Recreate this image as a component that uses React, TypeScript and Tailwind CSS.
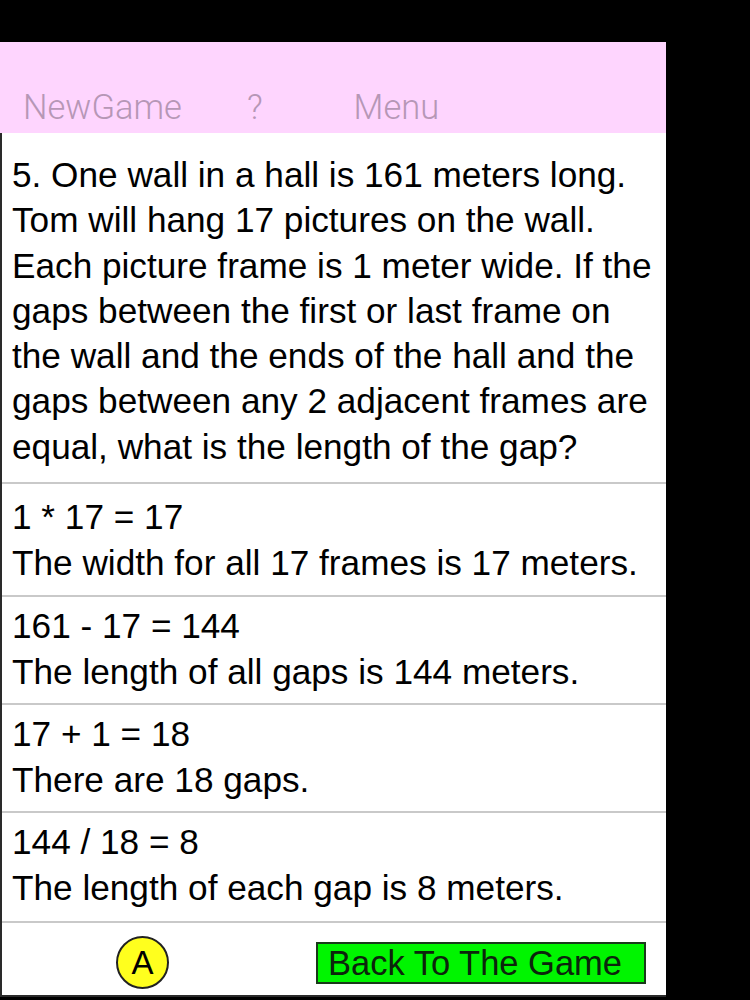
const question = [
  '5. One wall in a hall is 161 meters long.',
  'Tom will hang 17 pictures on the wall.',
  'Each picture frame is 1 meter wide. If the',
  'gaps between the first or last frame on',
  'the wall and the ends of the hall and the',
  'gaps between any 2 adjacent frames are',
  'equal, what is the length of the gap?',
];

const steps = [
  { math: '1 * 17 = 17', note: 'The width for all 17 frames is 17 meters.', box: 'h-[111px] pt-[10px]' },
  { math: '161 - 17 = 144', note: 'The length of all gaps is 144 meters.', box: 'h-[106px] pt-[6px]' },
  { math: '17 + 1 = 18', note: 'There are 18 gaps.', box: 'h-[106px] pt-[6px]' },
  { math: '144 / 18 = 8', note: 'The length of each gap is 8 meters.', box: 'h-[108px] pt-[6px]' },
];

function Divider() {
  return <div className="h-[2px] bg-[#c9c9c9]" />;
}

export default function App() {
  return (
    <div className="h-[1000px] w-[750px] bg-black pt-[42px] font-['Liberation_Sans',Arial,sans-serif] text-black">
      <div className="flex h-[955px] w-[666px] flex-col bg-white">
        <header className="flex h-[91px] items-end bg-[#fed5fe] pb-[6px] font-['Roboto',sans-serif] text-[34.5px] font-light leading-[40px] text-[#b697b6]">
          <span className="ml-[23px]">NewGame</span>
          <span className="ml-[65px]">?</span>
          <span className="ml-[91px]">Menu</span>
        </header>

        <main className="flex flex-1 flex-col border-l-2 border-[#2a2a2a]">
          <section className="h-[349px] pl-[10px] pt-[19px] text-[35.2px] leading-[45.3px]">
            {question.map((line) => (
              <div key={line} className="whitespace-nowrap">
                {line}
              </div>
            ))}
          </section>

          {steps.map((s) => (
            <div key={s.math}>
              <Divider />
              <section className={`${s.box} pl-[10px] text-[35.2px] leading-[46px]`}>
                <div className="whitespace-nowrap">{s.math}</div>
                <div className="whitespace-nowrap">{s.note}</div>
              </section>
            </div>
          ))}

          <Divider />
          <footer className="flex flex-1 items-start border-b-2 border-[#2a2a2a] pt-[13px]">
            <div className="ml-[114px] flex h-[53px] w-[53px] items-center justify-center rounded-full border-2 border-[#222] bg-[#ffff1e] text-[33px] leading-none">
              A
            </div>
            <button
              type="button"
              className="ml-auto mr-[20px] mt-[6px] flex h-[42px] w-[330px] items-center justify-start border-2 border-[#1a3a1a] bg-[#00f500] pl-[10px] text-[34.5px] leading-none text-[#0c250c]"
            >
              Back To The Game
            </button>
          </footer>
        </main>
      </div>
    </div>
  );
}
